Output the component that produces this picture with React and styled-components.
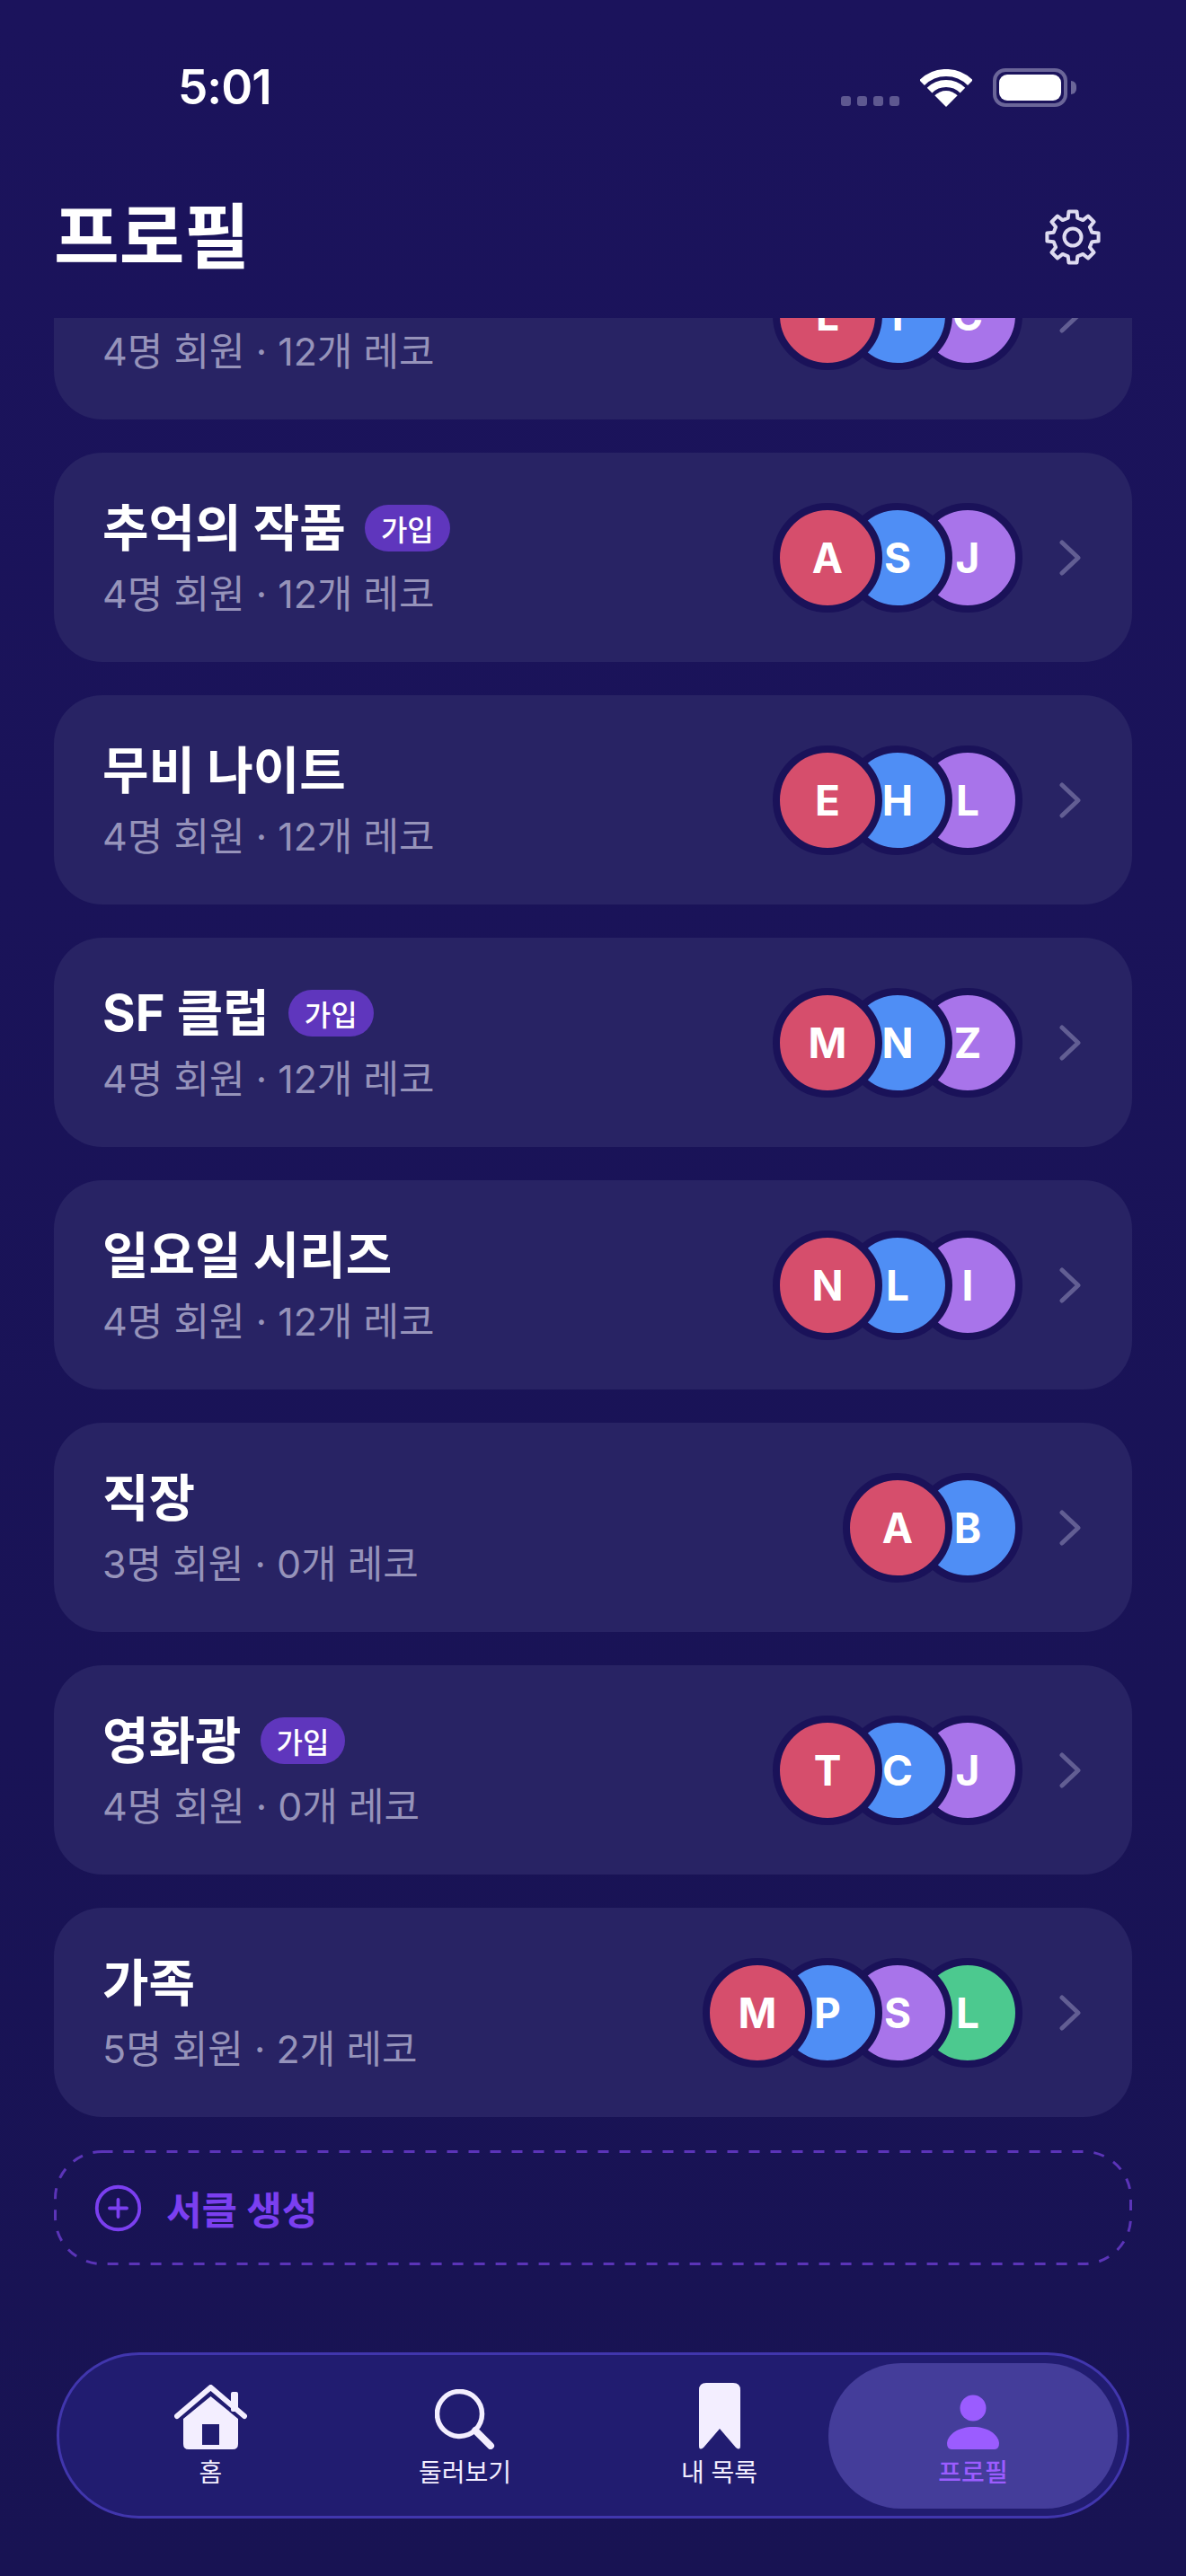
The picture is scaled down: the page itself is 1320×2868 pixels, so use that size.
import React from 'react';

import styled, { createGlobalStyle } from 'styled-components';
import { CirclePlus } from 'lucide-react';

const GlobalStyle = createGlobalStyle`
    html, body {
        margin: 0;
        padding: 0;
        background: #191358;
    }
    * {
        box-sizing: border-box;
    }
`;

const circles = [
    { name: '영화 모임', members: 4, records: 12, people: ['L', 'T', 'C'] },
    { name: '추억의 작품', members: 4, records: 12, joined: true, people: ['A', 'S', 'J'] },
    { name: '무비 나이트', members: 4, records: 12, people: ['E', 'H', 'L'] },
    { name: 'SF 클럽', members: 4, records: 12, joined: true, people: ['M', 'N', 'Z'] },
    { name: '일요일 시리즈', members: 4, records: 12, people: ['N', 'L', 'I'] },
    { name: '직장', members: 3, records: 0, people: ['A', 'B'] },
    { name: '영화광', members: 4, records: 0, joined: true, people: ['T', 'C', 'J'] },
    { name: '가족', members: 5, records: 2, people: ['M', 'P', 'S', 'L'] },
];

const avatarColors = ['#d64e6c', '#4f8ef5', '#a874ea', '#4cc98f'];

// 8 teeth, worked out once instead of typing every point
const gearPoints = Array.from({ length: 8 }, (_, i) => {
    const a = (i * Math.PI) / 4 - Math.PI / 2;
    const at = (r, d) => {
        const t = a + (d * Math.PI) / 180;
        return `${(32 + r * Math.cos(t)).toFixed(1)},${(32 + r * Math.sin(t)).toFixed(1)}`;
    };
    return [at(22, -14), at(29, -9), at(29, 9), at(22, 14)].join(' ');
}).join(' ');

const GearIcon = () => (
    <svg width="64" height="64" viewBox="0 0 64 64" fill="none" stroke="#dedbf0" strokeWidth="4">
        <polygon points={gearPoints} strokeLinejoin="round" />
        <circle cx="32" cy="32" r="9.5" />
    </svg>
);

const HomeIcon = () => (
    <svg width="81" height="72" viewBox="0 0 81 72">
        <path fill="#f3eeff" fillRule="evenodd" d="M10 38 L40.5 13 L71 38 V66 Q71 72 65 72 H16 Q10 72 10 66 Z M31 44 V67 H50 V44 Z" />
        <path fill="none" stroke="#f3eeff" strokeWidth="6" strokeLinecap="round" strokeLinejoin="round" d="M3 35 L40.5 3 L78 35" />
        <rect x="63" y="8" width="8" height="22" rx="2" fill="#f3eeff" />
    </svg>
);

const SearchIcon = () => (
    <svg width="67" height="67" viewBox="0 0 67 67">
        <circle cx="27.5" cy="27.5" r="25" fill="none" stroke="#f3eeff" strokeWidth="5.5" />
        <path fill="none" stroke="#f3eeff" strokeWidth="8" strokeLinecap="round" d="M45 46 L62 63" />
    </svg>
);

const BookmarkIcon = () => (
    <svg width="46" height="74" viewBox="0 0 46 74">
        <path fill="#f3eeff" d="M0 8 Q0 0 8 0 H38 Q46 0 46 8 V70 Q46 76 41 72 L23 51 L5 72 Q0 76 0 70 Z" />
    </svg>
);

const PersonIcon = () => (
    <svg width="58" height="61" viewBox="0 0 58 61">
        <circle cx="29" cy="15" r="14.5" fill="#9b5cff" />
        <path fill="#9b5cff" d="M0 54 C1 44 13 36 29 36 C45 36 57 44 58 54 Q58 61 53 61 H5 Q0 61 0 54 Z" />
    </svg>
);

const WifiIcon = () => (
    <svg width="58" height="42" viewBox="0 0 58 42">
        <path fill="none" stroke="#fff" strokeWidth="8" d="M2.1 15.1 A38 38 0 0 1 55.9 15.1" />
        <path fill="none" stroke="#fff" strokeWidth="8" d="M10.6 23.6 A26 26 0 0 1 47.4 23.6" />
        <path fill="#fff" d="M29 42 L16.3 29.3 A18 18 0 0 1 41.7 29.3 Z" />
    </svg>
);

const tabs = [
    { label: '홈', icon: <HomeIcon /> },
    { label: '둘러보기', icon: <SearchIcon /> },
    { label: '내 목록', icon: <BookmarkIcon /> },
    { label: '프로필', icon: <PersonIcon />, active: true },
];

const App = () => {
    return (
        <Screen>
            <GlobalStyle />
            <StatusBar>
                <Time>5:01</Time>
                <StatusIcons>
                    <Signal>
                        <i /><i /><i /><i />
                    </Signal>
                    <WifiIcon />
                    <Battery>
                        <BatteryLevel />
                    </Battery>
                </StatusIcons>
            </StatusBar>

            <Header>
                <PageTitle>프로필</PageTitle>
                <GearIcon />
            </Header>

            <ScrollArea>
                <CardList>
                    {circles.map((circle) => (
                        <Card key={circle.name}>
                            <CardText>
                                <TitleRow>
                                    <CardTitle>{circle.name}</CardTitle>
                                    {circle.joined && <Badge>가입</Badge>}
                                </TitleRow>
                                <CardMeta>{circle.members}명 회원 · {circle.records}개 레코</CardMeta>
                            </CardText>
                            <Avatars>
                                {circle.people.map((letter, i) => (
                                    <Avatar key={i} $color={avatarColors[i]} $index={i}>{letter}</Avatar>
                                ))}
                            </Avatars>
                            <Chevron width="24" height="40" viewBox="0 0 24 40">
                                <path d="M3 3 L21 20 L3 37" />
                            </Chevron>
                        </Card>
                    ))}
                    <CreateButton>
                        <DashedOutline width="1200" height="128">
                            <rect x="1.5" y="1.5" width="1197" height="125" rx="52" />
                        </DashedOutline>
                        <CirclePlus size={57} color="#7b3ff0" strokeWidth={1.6} />
                        <span>서클 생성</span>
                    </CreateButton>
                </CardList>
            </ScrollArea>

            <TabBar>
                {tabs.map((tab) => (
                    <Tab key={tab.label} $active={tab.active}>
                        <TabIcon>{tab.icon}</TabIcon>
                        <TabLabel $active={tab.active}>{tab.label}</TabLabel>
                    </Tab>
                ))}
            </TabBar>
        </Screen>
    );
};

const fontStack = `"Inter", "Noto Sans CJK KR", sans-serif`;

const Screen = styled.div`
    width: 1320px;
    height: 2868px;
    display: flex;
    flex-direction: column;
    overflow: hidden;
    background: linear-gradient(#1b135c, #181353);
    font-family: ${fontStack};
    color: #fff;
`;

const StatusBar = styled.div`
    height: 194px;
    flex: none;
    display: flex;
    align-items: center;
    justify-content: space-between;
    padding: 0 132px 0 198px;
`;

const Time = styled.div`
    font-size: 53px;
    font-weight: 600;
    letter-spacing: -1px;
`;

const StatusIcons = styled.div`
    display: flex;
    align-items: flex-end;
    gap: 23px;
`;

const Signal = styled.div`
    display: flex;
    gap: 7px;
    padding-bottom: 1px;
    i {
        width: 11px;
        height: 11px;
        border-radius: 3px;
        background: #5e5890;
    }
`;

const Battery = styled.div`
    position: relative;
    width: 83px;
    height: 43px;
    padding: 3px;
    border: 4px solid #6b6699;
    border-radius: 14px;
    &::after {
        content: '';
        position: absolute;
        right: -14px;
        top: 10px;
        width: 6px;
        height: 15px;
        border-radius: 0 6px 6px 0;
        background: #6b6699;
    }
`;

const BatteryLevel = styled.div`
    height: 100%;
    border-radius: 9px;
    background: #fff;
`;

const Header = styled.div`
    height: 160px;
    flex: none;
    display: flex;
    align-items: center;
    justify-content: space-between;
    padding: 0 94px 20px 60px;
`;

const PageTitle = styled.h1`
    margin: 0;
    font-size: 79px;
    font-weight: 700;
    line-height: 1.2;
`;

const ScrollArea = styled.div`
    height: 2265px;
    flex: none;
    overflow: hidden;
    padding: 0 60px;
`;

const CardList = styled.div`
    display: flex;
    flex-direction: column;
    gap: 37px;
    margin-top: -120px;
`;

const Card = styled.div`
    height: 233px;
    flex: none;
    display: flex;
    align-items: center;
    padding: 0 57px 0 54px;
    border-radius: 54px;
    background: #282364;
`;

const CardText = styled.div`
    flex: 1;
    display: flex;
    flex-direction: column;
    gap: 13px;
`;

const TitleRow = styled.div`
    display: flex;
    align-items: center;
    gap: 21px;
`;

const CardTitle = styled.div`
    font-size: 56px;
    font-weight: 700;
    line-height: 68px;
`;

const Badge = styled.span`
    height: 52px;
    padding: 0 18px;
    display: inline-flex;
    align-items: center;
    border-radius: 26px;
    background: #5f36bd;
    font-size: 32px;
    font-weight: 500;
`;

const CardMeta = styled.div`
    font-size: 43px;
    line-height: 52px;
    color: #9693ba;
`;

const Avatars = styled.div`
    display: flex;
    margin-right: 41px;
`;

const Avatar = styled.div`
    width: 122px;
    height: 122px;
    flex: none;
    display: flex;
    align-items: center;
    justify-content: center;
    border: 8px solid #1a1259;
    border-radius: 50%;
    background: ${(p) => p.$color};
    font-size: 46px;
    font-weight: 700;
    color: #fff;
    margin-left: ${(p) => (p.$index === 0 ? 0 : -44)}px;
    position: relative;
    z-index: ${(p) => 10 - p.$index};
`;

const Chevron = styled.svg`
    flex: none;
    path {
        fill: none;
        stroke: #625e93;
        stroke-width: 5;
        stroke-linecap: round;
        stroke-linejoin: round;
    }
`;

const CreateButton = styled.div`
    position: relative;
    height: 128px;
    flex: none;
    display: flex;
    align-items: center;
    gap: 25px;
    padding: 0 43px;
    color: #7b3ff0;
    font-size: 43px;
    font-weight: 700;
`;

const DashedOutline = styled.svg`
    position: absolute;
    left: 0;
    top: 0;
    rect {
        fill: none;
        stroke: #5b34b8;
        stroke-width: 3;
        stroke-dasharray: 12 12;
    }
`;

const TabBar = styled.div`
    height: 185px;
    flex: none;
    margin: 0 63px;
    padding: 0 0 0 27px;
    display: flex;
    align-items: center;
    border: 3px solid #4136ad;
    border-radius: 92px;
    background: #211c70;
`;

const Tab = styled.div`
    width: ${(p) => (p.$active ? '322px' : '283px')};
    height: 162px;
    flex: none;
    margin-left: ${(p) => (p.$active ? '-20px' : '0')};
    display: flex;
    flex-direction: column;
    align-items: center;
    border-radius: 81px;
    background: ${(p) => (p.$active ? '#443d9a' : 'transparent')};
`;

const TabIcon = styled.div`
    height: 96px;
    display: flex;
    align-items: flex-end;
    justify-content: center;
`;

const TabLabel = styled.div`
    margin-top: 8px;
    font-size: 28px;
    font-weight: ${(p) => (p.$active ? 500 : 400)};
    line-height: 36px;
    color: ${(p) => (p.$active ? '#9b5cff' : '#f3eeff')};
`;

export default App;
